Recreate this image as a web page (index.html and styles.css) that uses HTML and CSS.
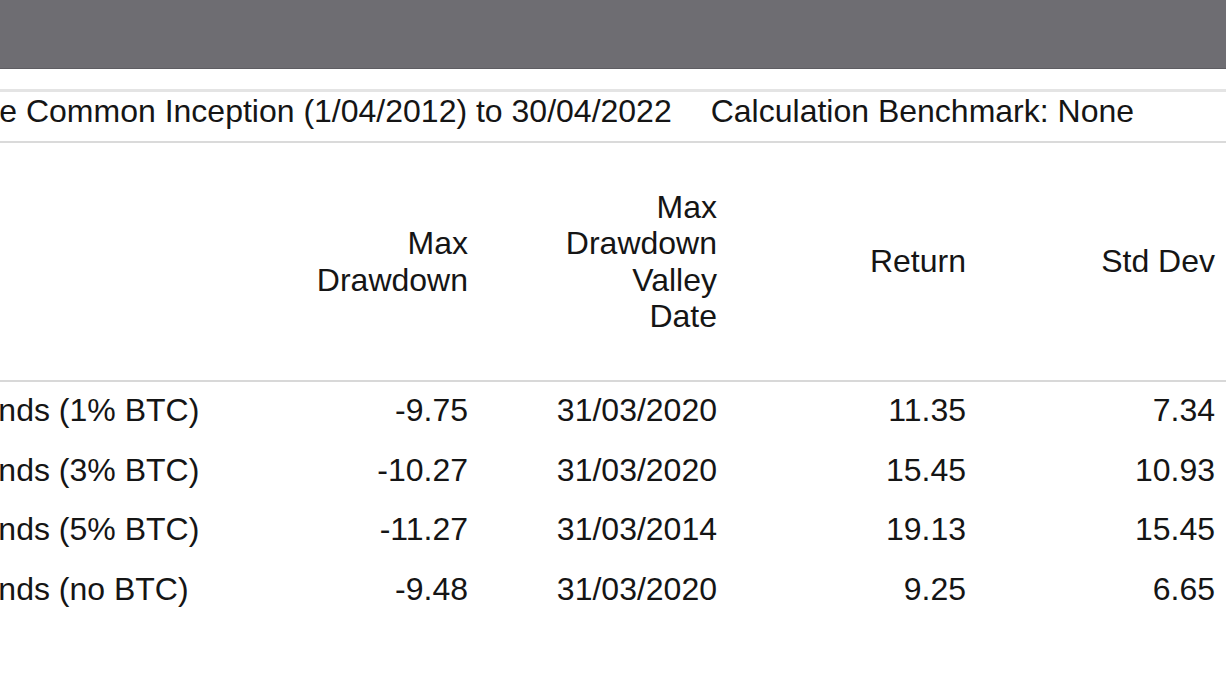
FILE: index.html
```html
<!DOCTYPE html>
<html lang="en">
<head>
<meta charset="utf-8">
<title>Risk statistics</title>
<link rel="stylesheet" href="styles.css">
</head>
<body>
<div class="topbar"></div>
<div class="page">
  <div class="subtitle">
    <span class="period">Since Common Inception (1/04/2012) to 30/04/2022</span>
    <span class="bench">Calculation Benchmark: None</span>
  </div>
  <div class="table">
    <div class="head">
      <div class="hcell label"></div>
      <div class="hcell">Max<br>Drawdown</div>
      <div class="hcell">Max<br>Drawdown<br>Valley<br>Date</div>
      <div class="hcell">Return</div>
      <div class="hcell">Std Dev</div>
    </div>
    <div class="row">
      <div class="cell label">Funds (1% BTC)</div>
      <div class="cell">-9.75</div>
      <div class="cell">31/03/2020</div>
      <div class="cell">11.35</div>
      <div class="cell">7.34</div>
    </div>
    <div class="row">
      <div class="cell label">Funds (3% BTC)</div>
      <div class="cell">-10.27</div>
      <div class="cell">31/03/2020</div>
      <div class="cell">15.45</div>
      <div class="cell">10.93</div>
    </div>
    <div class="row">
      <div class="cell label">Funds (5% BTC)</div>
      <div class="cell">-11.27</div>
      <div class="cell">31/03/2014</div>
      <div class="cell">19.13</div>
      <div class="cell">15.45</div>
    </div>
    <div class="row">
      <div class="cell label">Funds (no BTC)</div>
      <div class="cell">-9.48</div>
      <div class="cell">31/03/2020</div>
      <div class="cell">9.25</div>
      <div class="cell">6.65</div>
    </div>
  </div>
</div>
</body>
</html>
```
FILE: styles.css
```css
html, body {
  margin: 0;
  padding: 0;
  background: #ffffff;
  overflow: hidden;
  width: 1226px;
  height: 690px;
}

body {
  font-family: "Liberation Sans", Arial, sans-serif;
  font-size: 32px;
  color: #151515;
}

.topbar {
  height: 68px;
  background: #6e6d72;
  border-bottom: 1px solid #5e5d62;
}

.page {
  margin-left: -63px;
  width: 1300px;
  padding-top: 20px;
}

.subtitle {
  border-top: 3px solid #e4e4e4;
  border-bottom: 2px solid #dadada;
  height: 39px;
  padding-bottom: 10px;
  display: flex;
  align-items: center;
  gap: 39px;
  white-space: nowrap;
}

.table {
  display: flex;
  flex-direction: column;
}

.head,
.row {
  display: grid;
  grid-template-columns: 258px repeat(4, 249px);
  padding-left: 24px;
}

.head {
  height: 237px;
  border-bottom: 2px solid #d8d8d8;
  line-height: 36.3px;
}

.hcell {
  display: flex;
  align-items: center;
  justify-content: flex-end;
  text-align: right;
}

.row {
  height: 59.6px;
  line-height: 57.6px;
}

.cell {
  text-align: right;
  white-space: nowrap;
}

.label {
  text-align: left;
}
```
